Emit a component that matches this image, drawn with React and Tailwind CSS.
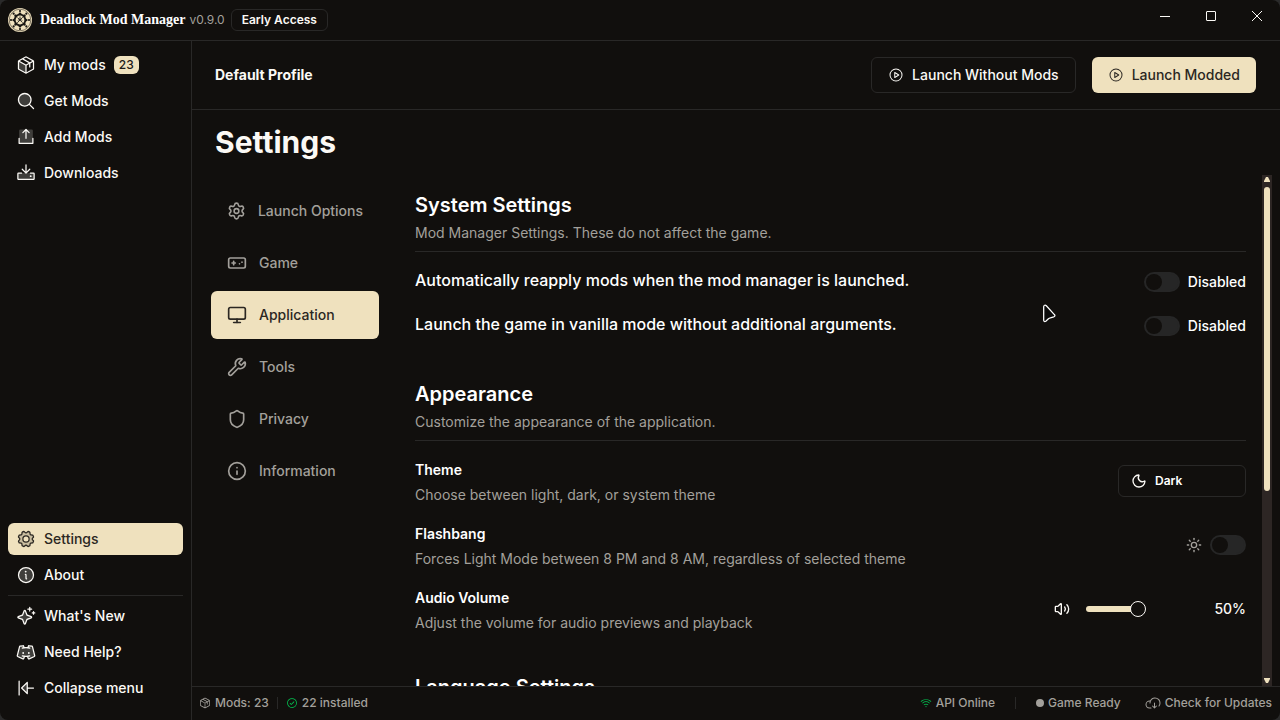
import React from "react";
import {
  PiPackageDuotone, PiMagnifyingGlassDuotone, PiUploadSimpleDuotone, PiDownloadDuotone,
  PiGearDuotone, PiInfoDuotone, PiSparkleDuotone, PiDiscordLogoDuotone, PiArrowLineLeftDuotone,
  PiPlayCircle, PiPackage, PiCheckCircle, PiWifiHigh, PiCloudArrowDown,
} from "react-icons/pi";
import { Settings, Monitor, Wrench, Shield, Info, Moon, Sun, Volume2 } from "lucide-react";

function Logo() {
  const spokes = [0, 45, 90, 135, 180, 225, 270, 315];
  return (
    <svg viewBox="0 0 24 24" className="size-6 shrink-0" aria-hidden="true">
      <circle cx="12" cy="12" r="12" fill="#efe1be" />
      <circle cx="12" cy="12" r="10.8" fill="none" stroke="#4a4437" strokeWidth="0.7" />
      {spokes.map((a) => (
        <circle key={a} cx="12" cy="3" r="1.1" fill="#1a1814" transform={`rotate(${a} 12 12)`} />
      ))}
      <circle cx="12" cy="12" r="7.6" fill="#1a1814" />
      {spokes.map((a) => (
        <ellipse key={a} cx="12" cy="4.3" rx="2.2" ry="1.6" fill="#efe1be" transform={`rotate(${a + 22.5} 12 12)`} />
      ))}
      <circle cx="12" cy="12" r="4.4" fill="#efe1be" />
      <path d="M9.3 14.8 14.7 9.2M9.5 9.6l5 5M12 8.5v2M10 12.6l2-2 2 2" stroke="#1a1814" strokeWidth="0.9" fill="none" />
    </svg>
  );
}

function GamepadBox({ className }) {
  return (
    <svg viewBox="0 0 24 24" className={className} fill="none" stroke="currentColor" strokeWidth="2" strokeLinecap="round" strokeLinejoin="round" aria-hidden="true">
      <rect x="2" y="6" width="20" height="12" rx="2" />
      <path d="M6 12h4M8 10v4M15 13h.01M18 11h.01" />
    </svg>
  );
}

function NavItem({ icon: Icon, label, active, badge }) {
  return (
    <a
      href="#"
      className={
        active
          ? "flex h-8 items-center gap-2 rounded-md bg-[#efe1be] px-2 text-sm font-medium text-[#2b2722]"
          : "flex h-8 items-center gap-2 rounded-md px-2 text-sm font-medium text-[#fbf9f5]"
      }
    >
      <Icon className="size-5 shrink-0" aria-hidden="true" />
      <span>{label}</span>
      {badge && (
        <span className="rounded-md bg-[#efe1be] px-[5px] text-xs leading-[18px] font-medium text-[#1c1917]">{badge}</span>
      )}
    </a>
  );
}

function Tab({ icon: Icon, label, active }) {
  return (
    <button
      type="button"
      className={
        active
          ? "flex h-12 w-full items-center gap-3 rounded-md bg-[#efe1be] px-4 text-sm font-medium whitespace-nowrap text-[#2b2722]"
          : "flex h-12 w-full items-center gap-3 rounded-md px-4 text-sm font-medium whitespace-nowrap text-[#a3a09b]"
      }
    >
      <Icon className="size-5" />
      {label}
    </button>
  );
}

function Toggle({ id, label }) {
  return (
    <input
      id={id}
      type="checkbox"
      role="switch"
      aria-label={label}
      className="h-5 w-9 shrink-0 appearance-none rounded-full border-2 border-[#262626] bg-[#262626] before:block before:size-4 before:rounded-full before:bg-[#110f0d] checked:bg-[#efe1be] checked:before:translate-x-4"
    />
  );
}

function SectionHead({ title, text }) {
  return (
    <div className="border-b border-[#292827] pb-2">
      <h2 className="text-xl leading-7 font-semibold text-white">{title}</h2>
      {text && <p className="mt-1 text-sm leading-5 text-[#a3a09b]">{text}</p>}
    </div>
  );
}

function SwitchRow({ id, label }) {
  return (
    <div className="flex h-7 items-start justify-between">
      <label htmlFor={id} className="text-base leading-6 font-medium text-white">{label}</label>
      <div className="flex h-7 items-center gap-2">
        <Toggle id={id} label={label} />
        <span className="text-sm font-medium text-white">Disabled</span>
      </div>
    </div>
  );
}

function Row({ id, title, text, children }) {
  return (
    <div className="flex h-12 items-center justify-between">
      <div>
        <label htmlFor={id} className="block text-sm leading-[26px] font-semibold text-white">{title}</label>
        <p className="mt-0.5 text-sm leading-5 text-[#a3a09b]">{text}</p>
      </div>
      {children}
    </div>
  );
}

export default function App() {
  return (
    <div className="bg-[#2a2a2a]">
      <div className="relative flex h-screen flex-col overflow-hidden rounded-lg bg-[#110f0d] font-['Inter',sans-serif] text-[#fbf9f5]">
        <header className="flex h-[41px] shrink-0 items-center border-b border-[#292827] pl-2">
          <Logo />
          <span className="ml-2 font-['Liberation_Serif',serif] text-sm font-bold whitespace-nowrap text-white">Deadlock Mod Manager</span>
          <span className="ml-1 text-xs text-[#a3a09b]">v0.9.0</span>
          <span className="ml-1.5 rounded-md border border-[#292827] px-2.5 py-0.5 text-xs leading-4 font-semibold">Early Access</span>
          <div className="ml-auto flex self-start">
            <button type="button" aria-label="Minimize" className="flex h-8 w-[46px] items-center justify-center">
              <svg viewBox="0 0 10 10" className="size-2.5" stroke="currentColor"><path d="M0 5.5h10" /></svg>
            </button>
            <button type="button" aria-label="Maximize" className="flex h-8 w-[46px] items-center justify-center">
              <svg viewBox="0 0 10 10" className="size-2.5" stroke="currentColor" fill="none"><rect x=".5" y=".5" width="9" height="9" rx=".5" /></svg>
            </button>
            <button type="button" aria-label="Close" className="flex h-8 w-[46px] items-center justify-center">
              <svg viewBox="0 0 10 10" className="size-2.5" stroke="currentColor"><path d="M0 0l10 10M10 0L0 10" /></svg>
            </button>
          </div>
        </header>

        <div className="flex min-h-0 flex-1">
          <nav className="flex w-[191px] shrink-0 flex-col px-2 pt-2 pb-4">
            <div className="flex flex-col gap-1">
              <NavItem icon={PiPackageDuotone} label="My mods" badge="23" />
              <NavItem icon={PiMagnifyingGlassDuotone} label="Get Mods" />
              <NavItem icon={PiUploadSimpleDuotone} label="Add Mods" />
              <NavItem icon={PiDownloadDuotone} label="Downloads" />
            </div>
            <div className="mt-auto flex flex-col gap-1">
              <NavItem icon={PiGearDuotone} label="Settings" active />
              <NavItem icon={PiInfoDuotone} label="About" />
              <hr className="border-[#292827]" />
              <NavItem icon={PiSparkleDuotone} label="What's New" />
              <NavItem icon={PiDiscordLogoDuotone} label="Need Help?" />
              <NavItem icon={PiArrowLineLeftDuotone} label="Collapse menu" />
            </div>
          </nav>

          <main className="flex min-w-0 flex-1 flex-col border-l border-[#292827]">
            <div className="flex h-[69px] shrink-0 items-center border-b border-[#292827] pr-6 pl-[23px]">
              <span className="text-sm font-bold">Default Profile</span>
              <div className="ml-auto flex gap-4">
                <button type="button" className="flex h-9 items-center gap-2 rounded-md border border-[#292827] px-4 text-sm font-medium">
                  <PiPlayCircle className="size-4" />
                  Launch Without Mods
                </button>
                <button type="button" className="flex h-9 items-center gap-2 rounded-md bg-[#efe1be] px-4 text-sm font-medium text-[#2b2722]">
                  <PiPlayCircle className="size-4" />
                  Launch Modded
                </button>
              </div>
            </div>

            <h1 className="shrink-0 pt-3.5 pb-[15px] pl-[23px] text-[30px] leading-9 font-bold text-[#fbf9f5]">Settings</h1>

            <div className="flex min-h-0 flex-1 pr-2">
              <div className="flex shrink-0 flex-col pt-3 pl-[19px]">
                <div className="flex w-[168px] flex-col gap-1">
                  <Tab icon={Settings} label="Launch Options" />
                  <Tab icon={GamepadBox} label="Game" />
                  <Tab icon={Monitor} label="Application" active />
                  <Tab icon={Wrench} label="Tools" />
                  <Tab icon={Shield} label="Privacy" />
                  <Tab icon={Info} label="Information" />
                </div>
              </div>

              <div className="ml-9 flex min-w-0 flex-1 flex-col gap-10 overflow-y-auto pt-4 pr-4 [scrollbar-width:none]">
                <section className="flex shrink-0 flex-col gap-4">
                  <SectionHead title="System Settings" text="Mod Manager Settings. These do not affect the game." />
                  <SwitchRow id="reapply" label="Automatically reapply mods when the mod manager is launched." />
                  <SwitchRow id="vanilla" label="Launch the game in vanilla mode without additional arguments." />
                </section>

                <section className="flex shrink-0 flex-col gap-4">
                  <SectionHead title="Appearance" text="Customize the appearance of the application." />
                  <Row id="theme" title="Theme" text="Choose between light, dark, or system theme">
                    <div className="flex h-8 w-32 items-center gap-2 rounded-md border border-[#292827] px-3">
                      <Moon className="size-4 shrink-0" />
                      <select id="theme" className="min-w-0 flex-1 appearance-none bg-transparent text-xs font-semibold text-white">
                        <option>Dark</option>
                        <option>Light</option>
                        <option>System</option>
                      </select>
                    </div>
                  </Row>
                  <Row id="flashbang" title="Flashbang" text="Forces Light Mode between 8 PM and 8 AM, regardless of selected theme">
                    <div className="flex items-center gap-2">
                      <Sun className="size-4 text-[#a3a09b]" />
                      <Toggle id="flashbang" label="Flashbang" />
                    </div>
                  </Row>
                  <Row id="volume" title="Audio Volume" text="Adjust the volume for audio previews and playback">
                    <div className="flex items-center">
                      <Volume2 className="size-4" />
                      <input
                        id="volume"
                        type="range"
                        defaultValue="50"
                        className="ml-4 h-4 w-[104px] appearance-none bg-transparent [&::-webkit-slider-runnable-track]:h-1.5 [&::-webkit-slider-runnable-track]:rounded-full [&::-webkit-slider-runnable-track]:bg-[linear-gradient(to_right,#efe1be_50%,transparent_50%)] [&::-webkit-slider-thumb]:-mt-[5px] [&::-webkit-slider-thumb]:size-4 [&::-webkit-slider-thumb]:appearance-none [&::-webkit-slider-thumb]:rounded-full [&::-webkit-slider-thumb]:border [&::-webkit-slider-thumb]:border-[#fbf9f5] [&::-webkit-slider-thumb]:bg-[#110f0d]"
                      />
                      <span className="w-14 text-right text-sm font-medium">50%</span>
                    </div>
                  </Row>
                </section>

                <section className="flex shrink-0 flex-col">
                  <SectionHead title="Language Settings" />
                </section>
              </div>

              <div className="flex w-2.5 shrink-0 flex-col items-center bg-[#2d2624] py-0.5" aria-hidden="true">
                <svg viewBox="0 0 8 6" className="h-1.5 w-2 shrink-0" fill="#efe1be"><path d="M3 0h2l2 4v1H1V4z" /></svg>
                <div className="mt-1 h-[304px] w-1.5 rounded-full bg-[#efe1be]" />
                <svg viewBox="0 0 8 6" className="mt-auto h-1.5 w-2 shrink-0" fill="#efe1be"><path d="M1 0h6v1L5 5H3L1 1z" /></svg>
              </div>
            </div>

            <footer className="flex h-[34px] shrink-0 items-center border-t border-[#292827] pr-2 pb-0.5 pl-[7px] text-xs font-medium text-[#a3a09b]">
              <PiPackage className="size-3" />
              <span className="ml-1">Mods: 23</span>
              <span className="mx-2 h-3 w-px bg-[#292827]" />
              <PiCheckCircle className="size-3 text-green-500" />
              <span className="ml-1">22 installed</span>
              <div className="ml-auto flex items-center">
                <PiWifiHigh className="size-3 text-green-500" />
                <span className="ml-1">API Online</span>
                <span className="mx-5 h-3 w-px bg-[#292827]" />
                <span className="size-2 rounded-full bg-[#a3a09b]" />
                <span className="ml-1">Game Ready</span>
                <button type="button" className="ml-6 flex items-center gap-1">
                  <PiCloudArrowDown className="size-4" />
                  Check for Updates
                </button>
              </div>
            </footer>
          </main>
        </div>

        <svg viewBox="0 0 14 18" className="pointer-events-none absolute top-[304px] left-[1042px] h-[19px] w-[15px]" aria-hidden="true">
          <path d="M1.5 2.5v13c0 1 1 1.5 2 .8l2.5-2.3c.6-.5 1-.7 1.800-.9l3.200-.9c1.300-.4 1.500-1.300.6-2.200L4 1.700c-1-1-2.500-.6-2.500.8z" fill="#0a0a0a" stroke="#fff" strokeWidth="1.200" />
        </svg>
      </div>
    </div>
  );
}
